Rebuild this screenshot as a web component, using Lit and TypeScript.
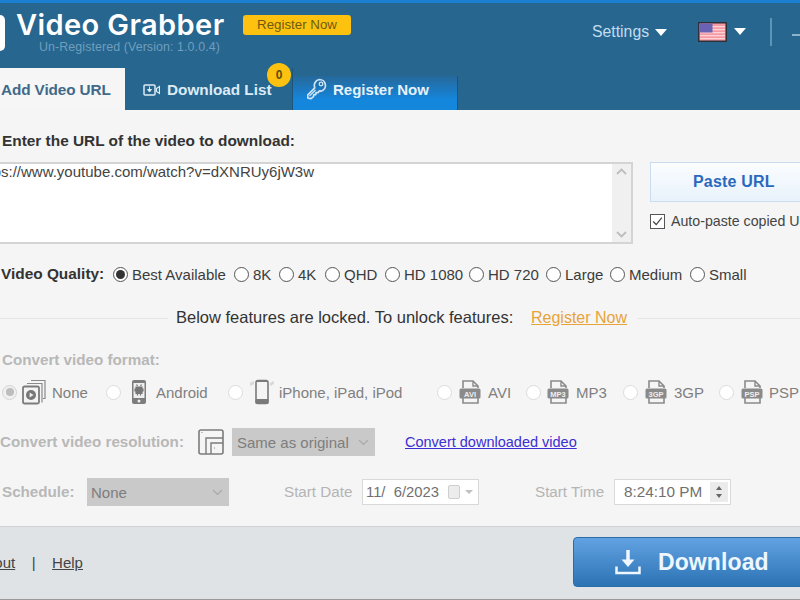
import { LitElement, html, css, svg } from "lit";
import { customElement } from "lit/decorators.js";

const fileIcon = (label: string) => html`<svg class="ficon" width="22" height="26" viewBox="0 0 22 26">
  <path d="M4 9V2h10l5 5v2M4 19v5h15v-5" fill="none" stroke="#8a8a8a" stroke-width="1.6"/>
  <path d="M14 2v5h5" fill="none" stroke="#8a8a8a" stroke-width="1.4"/>
  <rect x="0.5" y="9.5" width="21" height="10" rx="1.5" fill="#8a8a8a"/>
  <text x="11" y="17.6" text-anchor="middle" font-family="Liberation Sans" font-size="7.5" font-weight="700" fill="#f0f0f0">${label}</text>
</svg>`;

const noneIcon = html`<svg width="24" height="26" viewBox="0 0 24 26">
  <path d="M9 1.500h14v18h-2" fill="none" stroke="#8a8a8a" stroke-width="1.2"/>
  <path d="M5 4.500h15v19" fill="none" stroke="#8a8a8a" stroke-width="1.2"/>
  <rect x="1" y="7.500" width="16" height="17" rx="1.500" fill="#f4f4f4" stroke="#7c7c7c" stroke-width="1.800"/>
  <circle cx="9" cy="16" r="5" fill="#777"/><path d="M7.600 13.500l4 2.500-4 2.500z" fill="#eee"/>
</svg>`;

const androidIcon = html`<svg width="16" height="26" viewBox="0 0 16 26">
  <rect x="1" y="1" width="14" height="24" rx="2" fill="#7d7d7d"/>
  <rect x="2.500" y="4" width="11" height="15" fill="#efefef"/>
  <path d="M5 8h6v6.500H5zM4 9.500v3M12 9.500v3M6.500 7l-1-1.500M9.500 7l1-1.500M6.500 14.500v2M9.500 14.500v2" stroke="#777" stroke-width="1.200" fill="#777"/>
  <circle cx="8" cy="22" r="1.500" fill="#eee"/>
</svg>`;

const iphoneIcon = html`<svg width="24" height="26" viewBox="0 0 24 26">
  <rect x="6" y="1.500" width="12" height="23" rx="2" fill="#f5f5f5" stroke="#7a7a7a" stroke-width="1.600"/>
  <rect x="5.500" y="20" width="13" height="5" rx="1" fill="#7a7a7a"/>
  <rect x="7" y="1" width="10" height="2" fill="#7a7a7a"/>
  <path d="M1 3.500v3M3 2.500v3M21 3.500v3M23 2.500v3" stroke="#bbb" stroke-width="1"/>
</svg>`;

type Q = [string, number, boolean?];
const qualities: Q[] = [
  ["Best Available", 121, true], ["8K", 45], ["4K", 46], ["QHD", 60], ["HD 1080", 84],
  ["HD 720", 77], ["Large", 64], ["Medium", 80], ["Small", 60],
];

@customElement("app-root")
export class AppRoot extends LitElement {
  static styles = css`
    :host { display: block; width: 800px; height: 600px; overflow: hidden; font-family: "Liberation Sans", Arial, sans-serif; color: #3a3a3a; }
    * { box-sizing: border-box; }
    .win { width: 800px; height: 600px; display: flex; flex-direction: column; overflow: hidden; background: #f5f5f5; }
    .topline { height: 3px; background: #1b80d2; flex: none; }
    .header { height: 107px; flex: none; background: #26668f; display: flex; flex-direction: column; position: relative; }
    .hrow { height: 65px; flex: none; display: flex; align-items: flex-start; }
    .logo { width: 5px; height: 36px; margin-top: 12px; background: #fff; border-radius: 0 5px 5px 0; flex: none; }
    .brand { margin-left: 11px; width: 227px; flex: none; }
    .title { font-family: Inter, "Open Sans", sans-serif; font-size: 29px; font-weight: 600; color: #fff; line-height: 31px; margin-top: 6px; letter-spacing: 0.4px; white-space: nowrap; }
    .sub { font-size: 12.400px; color: #709ebd; line-height: 14px; margin: 0 0 0 23px; white-space: nowrap; letter-spacing: 0.1px; }
    .reg { width: 108px; height: 20px; margin-top: 12px; background: #fdc20f; border-radius: 3px; color: #6d5a12; font-size: 13.300px; line-height: 20px; text-align: center; flex: none; }
    .settings { margin-left: 241px; margin-top: 20px; width: 58px; color: #c2dcef; font-size: 15.800px; line-height: 18px; flex: none; white-space: nowrap; }
    .caret { width: 0; height: 0; border-left: 6.500px solid transparent; border-right: 6.500px solid transparent; border-top: 7px solid #fff; flex: none; }
    .c1 { margin-left: 5px; margin-top: 26px; }
    .flag { margin-left: 31px; margin-top: 19px; flex: none; display: block; }
    .c2 { margin-left: 7px; margin-top: 25px; }
    .vline { width: 2px; height: 28px; margin-left: 24px; margin-top: 15px; background: #5d94b8; flex: none; }
    .dash { width: 10px; height: 2px; margin-left: 20px; margin-top: 31px; background: #8db4cf; flex: none; }
    .tabs { flex: 1; display: flex; align-items: flex-end; }
    .tab { height: 42px; display: flex; align-items: center; font-size: 15.300px; font-weight: 700; flex: none; white-space: nowrap; }
    .tab.active { width: 125px; background: #f6f6f6; color: #3f6a8a; padding: 2px 0 0 1px; letter-spacing: -0.100px; }
    .tab.list { width: 168px; color: #dcebf6; padding: 2px 0 0 18px; gap: 7px; position: relative; border-right: 1px solid #1d5479; }
    .tab.key { width: 165px; height: 34px; font-size: 15px; color: #e6f2fb; padding: 0 0 8px 14px; gap: 6px; background: linear-gradient(#26689a, #1486dc 70%); border-right: 1px solid #1d5479; }
    .badge { position: absolute; left: 142px; top: -5px; width: 24px; height: 24px; border-radius: 50%; background: #fdc20f; color: #5e4c08; font-size: 12px; font-weight: 700; display: flex; align-items: center; justify-content: center; }

    .body { flex: 1; min-height: 0; display: flex; flex-direction: column; }
    .label { font-size: 15.400px; font-weight: 700; color: #333; white-space: nowrap; }
    .urlhead { height: 52px; flex: none; padding: 22px 0 0 2px; line-height: 17px; }
    .urlrow { height: 82px; flex: none; display: flex; }
    .area { margin-left: -26px; width: 659px; flex: none; height: 82px; background: #fff; border: 2px solid #d4d4d4; display: flex; }
    .urltext { flex: 1; font-size: 15px; line-height: 16px; color: #444; }
    .scroll { width: 19px; background: #f0f0f0; display: flex; flex-direction: column; justify-content: space-between; align-items: center; padding: 4px 0; flex: none; }
    .scroll svg { display: block; }
    .side { margin-left: 17px; width: 170px; flex: none; display: flex; flex-direction: column; }
    .paste { width: 170px; height: 40px; flex: none; background: linear-gradient(#fbfdff, #e8f2fb); border: 1px solid #c9dcf0; color: #2a69bd; font-size: 16px; font-weight: 700; display: flex; align-items: center; padding-left: 42px; letter-spacing: 0.2px; white-space: nowrap; }
    .auto { margin-top: 11px; display: flex; align-items: center; gap: 6px; font-size: 14.200px; line-height: 16px; color: #444; white-space: nowrap; }
    .check { width: 15px; height: 15px; border: 1.500px solid #555; background: #fff; flex: none; display: block; }
    .qrow { height: 48px; flex: none; display: flex; align-items: center; padding-top: 12px; }
    .qlabel { width: 113px; padding-left: 1px; flex: none; }
    .opt { display: flex; align-items: center; gap: 4px; font-size: 15px; color: #3c3c3c; white-space: nowrap; flex: none; }
    .radio { width: 15px; height: 15px; border-radius: 50%; border: 1.500px solid #555; background: #fff; flex: none; position: relative; display: block; }
    .radio.on::after { content: ""; position: absolute; inset: 2px; border-radius: 50%; background: #333; }
    .lockline { height: 24px; flex: none; margin-top: 14px; display: flex; align-items: center; }
    .rule { height: 1px; background: #e5e5e5; flex: none; }
    .r1 { width: 168px; }
    .r2 { width: 170px; margin-left: 11px; }
    .lockmsg { font-size: 16.500px; width: 363px; padding: 0 0 2px 8px; color: #333; white-space: nowrap; flex: none; }
    .lockreg { font-size: 16px; color: #e8a33a; text-decoration: underline; width: 96px; flex: none; white-space: nowrap; }
    .dim { color: #b8b8b8; font-size: 15.200px; }
    .fhead { height: 17px; margin-top: 21px; line-height: 17px; padding-left: 2px; flex: none; }
    .frow { height: 28px; margin-top: 10px; flex: none; display: flex; align-items: center; }
    .fitem { display: flex; align-items: center; font-size: 15px; color: #808080; white-space: nowrap; flex: none; padding-left: 2px; }
    .radio.off { border: 1.500px solid #dcdcdc; background: #fff; }
    .radio.sel { border: 1.500px solid #d4d4d4; background: #f0f0f0; }
    .radio.sel::after { content: ""; position: absolute; inset: 2.500px; border-radius: 50%; background: #bdbdbd; }
    .ficon { display: block; }
    .rrow { height: 28px; margin-top: 22px; flex: none; display: flex; align-items: center; }
    .rlabel { width: 198px; flex: none; padding-bottom: 2px; }
    .rsvg { flex: none; display: block; }
    .sel-box { background: #c9c9c9; color: #7d7d7d; font-size: 15px; height: 28px; display: flex; align-items: center; justify-content: space-between; padding: 0 6px 0 5px; flex: none; white-space: nowrap; }
    .sel-a { width: 143px; margin-left: 8px; }
    .sel-b { width: 142px; padding-left: 4px; }
    .convert { margin-left: 30px; font-size: 14.500px; color: #3b2fd2; text-decoration: underline; white-space: nowrap; flex: none; }
    .srow { height: 28px; margin-top: 22px; flex: none; display: flex; align-items: center; }
    .slabel { width: 87px; padding: 0 0 2px 2px; flex: none; }
    .dlabel { font-size: 15.200px; color: #b4b4b4; white-space: nowrap; flex: none; padding-bottom: 2px; }
    .dl1 { width: 78px; margin-left: 55px; }
    .dl2 { width: 79px; margin-left: 56px; }
    .inbox { width: 117px; height: 26px; background: #fff; border: 1px solid #d9d9d9; display: flex; align-items: center; font-size: 14.800px; color: #707070; flex: none; white-space: nowrap; }
    .date { padding-left: 3px; }
    .dchk { width: 12px; height: 14px; margin-left: 9px; border: 1px solid #cfcfcf; background: #ececec; border-radius: 2px; flex: none; }
    .dcar { margin-left: 5px; width: 0; height: 0; border-left: 4px solid transparent; border-right: 4px solid transparent; border-top: 4px solid #c0c0c0; flex: none; }
    .time { padding-left: 9px; justify-content: space-between; padding-right: 2px; font-size: 15.300px; }
    .spin { width: 18px; height: 20px; background: #ebebeb; display: flex; flex-direction: column; justify-content: center; gap: 4px; align-items: center; flex: none; }
    .up { width: 0; height: 0; border-left: 3px solid transparent; border-right: 3px solid transparent; border-bottom: 4px solid #666; }
    .dn { width: 0; height: 0; border-left: 3px solid transparent; border-right: 3px solid transparent; border-top: 4px solid #666; }

    .footer { height: 74px; flex: none; background: #e0e3e5; border-top: 1px solid #cfd1d3; border-bottom: 1px solid #9a9a9a; display: flex; align-items: center; }
    .links { margin-left: -24px; display: flex; font-size: 15px; color: #444; width: 597px; flex: none; align-items: center; padding-bottom: 2px; }
    .links u { white-space: nowrap; }
    .bar { margin: 0 16.500px; }
    .dl { width: 240px; height: 50px; margin-bottom: 2px; flex: none; border: 1px solid #2a6da8; border-radius: 4px; background: linear-gradient(#62a2e2, #2c73b4); display: flex; align-items: center; padding-left: 41px; gap: 17px; color: #eef7ff; font-size: 23px; font-weight: 700; letter-spacing: 0.1px; white-space: nowrap; }
    .dl svg { display: block; flex: none; }
  `;

  render() {
    return html`<div class="win">
      <div class="topline"></div>
      <div class="header">
        <div class="hrow">
          <div class="logo"></div>
          <div class="brand">
            <div class="title">Video Grabber</div>
            <div class="sub">Un-Registered (Version: 1.0.0.4)</div>
          </div>
          <div class="reg">Register Now</div>
          <div class="settings">Settings</div>
          <span class="caret c1"></span>
          <svg class="flag" width="29" height="20" viewBox="0 0 29 20">
            <rect x="0.750" y="0.750" width="27.500" height="18.500" fill="#f59aa2" stroke="#2f2f3a" stroke-width="1.500"/>
            ${[4, 7, 10, 13, 16].map((y) => svg`<rect x="2" y="${y}" width="25" height="1.300" fill="#fbd2d5"/>`)}
            <rect x="1.500" y="1.500" width="13" height="9" fill="#6a63b4"/>
          </svg>
          <span class="caret c2"></span>
          <div class="vline"></div>
          <div class="dash"></div>
        </div>
        <div class="tabs">
          <div class="tab active">Add Video URL</div>
          <div class="tab list">
            <svg width="17" height="12" viewBox="0 0 17 12">
              <rect x="1" y="1" width="11" height="10" rx="1" fill="none" stroke="#dcebf6" stroke-width="1.500"/>
              <path d="M6.500 2.500v4M4.500 5.500l2 2.500 2-2.500z" fill="#dcebf6" stroke="#dcebf6"/>
              <path d="M13.500 4.500l3-2v7l-3-2z" fill="none" stroke="#dcebf6" stroke-width="1.200"/>
            </svg>
            <span>Download List</span>
            <div class="badge">0</div>
          </div>
          <div class="tab key">
            <svg width="20" height="22" viewBox="0 0 20 22">
              <path d="M12.500 1.500a6 6 0 0 1 1.800 11.700l-1.800-.300-1.500 1.700h-2l-.2 2h-2l-.3 2-2.500 2-3-.500-.5-3 7.300-7.300a6 6 0 0 1 4.700-8.300z" fill="none" stroke="#cfe4f5" stroke-width="1.700" stroke-linejoin="round"/>
              <circle cx="14" cy="6" r="1.800" fill="none" stroke="#cfe4f5" stroke-width="1.300"/>
              <path d="M2.500 18l6-6" stroke="#cfe4f5" stroke-width="1.200"/>
            </svg>
            <span>Register Now</span>
          </div>
        </div>
      </div>

      <div class="body">
        <div class="urlhead label">Enter the URL of the video to download:</div>
        <div class="urlrow">
          <div class="area">
            <div class="urltext">https://www.youtube.com/watch?v=dXNRUy6jW3w</div>
            <div class="scroll">
              <svg width="11" height="7" viewBox="0 0 11 7"><path d="M1 6l4.500-4.500L10 6" fill="none" stroke="#bdbdbd" stroke-width="1.800"/></svg>
              <svg width="11" height="7" viewBox="0 0 11 7"><path d="M1 1l4.500 4.500L10 1" fill="none" stroke="#bdbdbd" stroke-width="1.800"/></svg>
            </div>
          </div>
          <div class="side">
            <div class="paste">Paste URL</div>
            <div class="auto">
              <svg class="check" viewBox="0 0 15 15"><path d="M2.500 7.500l3.500 3.500 6.500-8" fill="none" stroke="#444" stroke-width="1.400"/></svg>
              <span>Auto-paste copied URL</span>
            </div>
          </div>
        </div>
        <div class="qrow">
          <div class="label qlabel">Video Quality:</div>
          ${qualities.map(([t, w, on]) => html`<div class="opt" style="width:${w}px"><span class="radio ${on ? "on" : ""}"></span><span>${t}</span></div>`)}
        </div>
        <div class="lockline">
          <div class="rule r1"></div>
          <div class="lockmsg">Below features are locked. To unlock features:</div>
          <div class="lockreg">Register Now</div>
          <div class="rule r2"></div>
        </div>
        <div class="fhead label dim">Convert video format:</div>
        <div class="frow">
          ${this.fmt(104, "sel", noneIcon, "None", 5, 6)}
          ${this.fmt(122, "", androidIcon, "Android", 10, 9)}
          ${this.fmt(209, "", iphoneIcon, "iPhone, iPad, iPod", 7, 5)}
          ${this.fmt(89, "", fileIcon("AVI"), "AVI", 7, 7)}
          ${this.fmt(97, "", fileIcon("MP3"), "MP3", 6, 7)}
          ${this.fmt(96, "", fileIcon("3GP"), "3GP", 7, 7)}
          ${this.fmt(90, "", fileIcon("PSP"), "PSP", 7, 6)}
        </div>
        <div class="rrow">
          <div class="label dim rlabel">Convert video resolution:</div>
          <svg class="rsvg" width="26" height="26" viewBox="0 0 26 26">
            <rect x="1" y="1" width="24" height="24" rx="2" fill="none" stroke="#7c7c7c" stroke-width="1.600"/>
            <path d="M8 25V9h17M13 25V14h12" fill="none" stroke="#7c7c7c" stroke-width="1.400"/>
            <path d="M3.500 3.500h1M16 19h1" stroke="#888" stroke-width="1.200"/>
          </svg>
          <div class="sel-box sel-a"><span>Same as original</span>${this.chev()}</div>
          <div class="convert">Convert downloaded video</div>
        </div>
        <div class="srow">
          <div class="label dim slabel">Schedule:</div>
          <div class="sel-box sel-b"><span>None</span>${this.chev()}</div>
          <div class="dlabel dl1">Start Date</div>
          <div class="inbox date"><span>11/&nbsp; 6/2023</span><span class="dchk"></span><span class="dcar"></span></div>
          <div class="dlabel dl2">Start Time</div>
          <div class="inbox time"><span>8:24:10 PM</span><span class="spin"><span class="up"></span><span class="dn"></span></span></div>
        </div>
      </div>

      <div class="footer">
        <div class="links"><u>About</u><span class="bar">|</span><u>Help</u></div>
        <div class="dl">
          <svg width="26" height="26" viewBox="0 0 26 26">
            <path d="M13 1v14" stroke="#eef7ff" stroke-width="3.500"/>
            <path d="M6.500 10.500L13 18l6.500-7.500z" fill="#eef7ff"/>
            <path d="M1.500 17.500v6.500h23v-6.500" fill="none" stroke="#eef7ff" stroke-width="2.500"/>
          </svg>
          <span>Download</span>
        </div>
      </div>
    </div>`;
  }

  private chev() {
    return html`<svg width="11" height="7" viewBox="0 0 11 7"><path d="M1 1l4.500 4.500L10 1" fill="none" stroke="#a9a9a9" stroke-width="1.200"/></svg>`;
  }

  private fmt(w: number, cls: string, icon: unknown, label: string, g1: number, g2: number) {
    return html`<div class="fitem" style="width:${w}px"><span class="radio ${cls === "sel" ? "sel" : "off"}"></span><span style="width:${g1}px"></span>${icon}<span style="width:${g2}px"></span><span>${label}</span></div>`;
  }
}
